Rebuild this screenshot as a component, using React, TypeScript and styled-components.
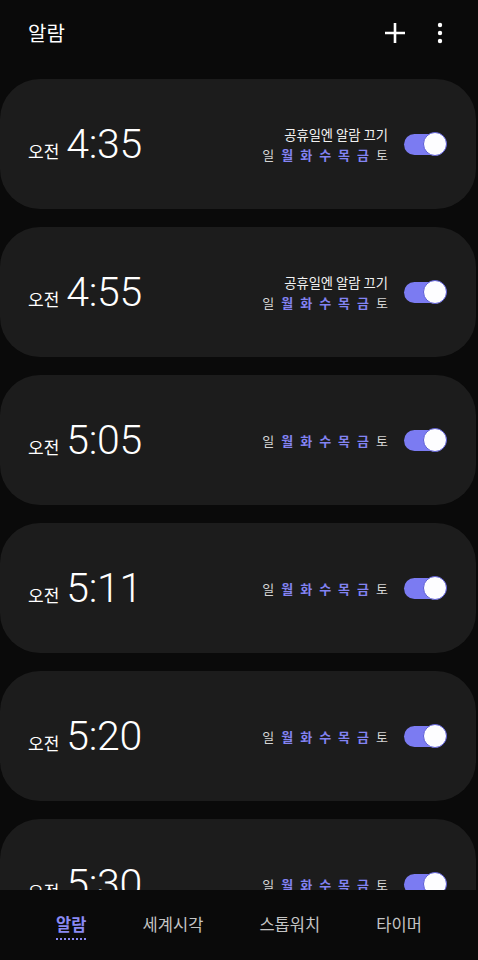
import styled, { createGlobalStyle } from 'styled-components'

interface Alarm {
  id: number;
  time: string;
  holidayOff: boolean;
}

const alarms: Alarm[] = [
  { id: 1, time: '4:35', holidayOff: true },
  { id: 2, time: '4:55', holidayOff: true },
  { id: 3, time: '5:05', holidayOff: false },
  { id: 4, time: '5:11', holidayOff: false },
  { id: 5, time: '5:20', holidayOff: false },
  { id: 6, time: '5:30', holidayOff: false },
]

// weekdays on (월~금) are highlighted
const days = [
  { label: '일', on: false },
  { label: '월', on: true },
  { label: '화', on: true },
  { label: '수', on: true },
  { label: '목', on: true },
  { label: '금', on: true },
  { label: '토', on: false },
]

const tabs = ['알람', '세계시각', '스톱워치', '타이머']

const GlobalStyle = createGlobalStyle`
  html, body {
    margin: 0;
    padding: 0;
    background: #0a0a0a;
  }
  body {
    font-family: "Noto Sans", "Noto Sans CJK KR", sans-serif;
  }
`

const App = () => {
  return (
    <>
      <GlobalStyle />
      <Screen>
        <Header>
          <Title>알람</Title>
          <Actions>
            <svg width="22" height="22" viewBox="0 0 22 22">
              <path d="M11 1v20M1 11h20" stroke="#fff" strokeWidth="2.6" />
            </svg>
            <svg width="6" height="22" viewBox="0 0 6 22">
              <circle cx="3" cy="3" r="2.2" fill="#fff" />
              <circle cx="3" cy="11" r="2.2" fill="#fff" />
              <circle cx="3" cy="19" r="2.2" fill="#fff" />
            </svg>
          </Actions>
        </Header>
        <List>
          {alarms.map(alarm => (
            <Card key={alarm.id}>
              <TimeBox>
                <Meridiem>오전</Meridiem>
                <Time>{alarm.time}</Time>
              </TimeBox>
              <Right>
                <Info>
                  {alarm.holidayOff && <Holiday>공휴일엔 알람 끄기</Holiday>}
                  <Days>
                    {days.map(d => (
                      <Day key={d.label} $on={d.on}>{d.label}</Day>
                    ))}
                  </Days>
                </Info>
                <Toggle>
                  <Knob />
                </Toggle>
              </Right>
            </Card>
          ))}
        </List>
        <Nav>
          {tabs.map((tab, i) => (
            <Tab key={tab} $active={i === 0}>{tab}</Tab>
          ))}
        </Nav>
      </Screen>
    </>
  )
}

const Screen = styled.div`
  width: 478px;
  height: 960px;
  display: flex;
  flex-direction: column;
  background: #0a0a0a;
  overflow: hidden;
`

const Header = styled.div`
  height: 66px;
  flex-shrink: 0;
  display: flex;
  align-items: center;
  justify-content: space-between;
  padding: 0 35px 0 28px;
`

const Title = styled.div`
  color: #fff;
  font-family: "Noto Sans CJK KR", sans-serif;
  font-size: 20px;
  margin-top: -1px;
`

const Actions = styled.div`
  display: flex;
  align-items: center;
  gap: 31px;
  svg {
    display: block;
  }
`

const List = styled.div`
  flex: 1;
  overflow: hidden;
  display: flex;
  flex-direction: column;
  gap: 18px;
  padding-top: 13px;
`

const Card = styled.div`
  flex-shrink: 0;
  width: 476px;
  height: 130px;
  box-sizing: border-box;
  border-radius: 40px;
  background: #1c1c1c;
  display: flex;
  align-items: center;
  justify-content: space-between;
  padding: 0 30px 0 28px;
`

const TimeBox = styled.div`
  display: flex;
  align-items: baseline;
  gap: 7px;
  margin-top: 1px;
`

const Meridiem = styled.span`
  color: #fff;
  font-family: "Noto Sans CJK KR", sans-serif;
  font-size: 17px;
`

const Time = styled.span`
  color: #fff;
  font-family: Roboto, sans-serif;
  font-weight: 300;
  font-size: 41px;
  letter-spacing: -0.3px;
  line-height: 1;
`

const Right = styled.div`
  display: flex;
  align-items: center;
  gap: 16px;
`

const Info = styled.div`
  display: flex;
  flex-direction: column;
  align-items: flex-end;
  gap: 1px;
`

const Holiday = styled.div`
  color: #f2f2f2;
  font-family: "Noto Sans CJK KR", sans-serif;
  font-size: 13.3px;
  line-height: 19px;
`

const Days = styled.div`
  display: flex;
  gap: 7px;
`

const Day = styled.span<{ $on: boolean }>`
  color: ${p => (p.$on ? '#8383f2' : '#d4d4d4')};
  font-weight: ${p => (p.$on ? 700 : 400)};
  font-family: "Noto Sans CJK KR", sans-serif;
  font-size: 13px;
  line-height: 19px;
`

const Toggle = styled.div`
  position: relative;
  width: 42px;
  height: 21px;
  border-radius: 11px;
  background: #7b7bf2;
`

const Knob = styled.div`
  position: absolute;
  right: -1px;
  top: 50%;
  width: 24px;
  height: 24px;
  box-sizing: border-box;
  margin-top: -12px;
  border-radius: 50%;
  background: #fdfdff;
  border: 1.5px solid #5b5bd6;
`

const Nav = styled.div`
  height: 70px;
  flex-shrink: 0;
  display: flex;
  align-items: center;
  justify-content: space-evenly;
  background: #0a0a0a;
`

const Tab = styled.div<{ $active: boolean }>`
  color: ${p => (p.$active ? '#8a8af5' : '#c4c4c4')};
  font-family: "Noto Sans CJK KR", sans-serif;
  font-size: 16.5px;
  font-weight: ${p => (p.$active ? 700 : 400)};
  line-height: 22px;
  padding-bottom: 3px;
  border-bottom: ${p => (p.$active ? '2px dotted #8a8af5' : '2px solid transparent')};
  margin-top: 3px;
`

export default App
